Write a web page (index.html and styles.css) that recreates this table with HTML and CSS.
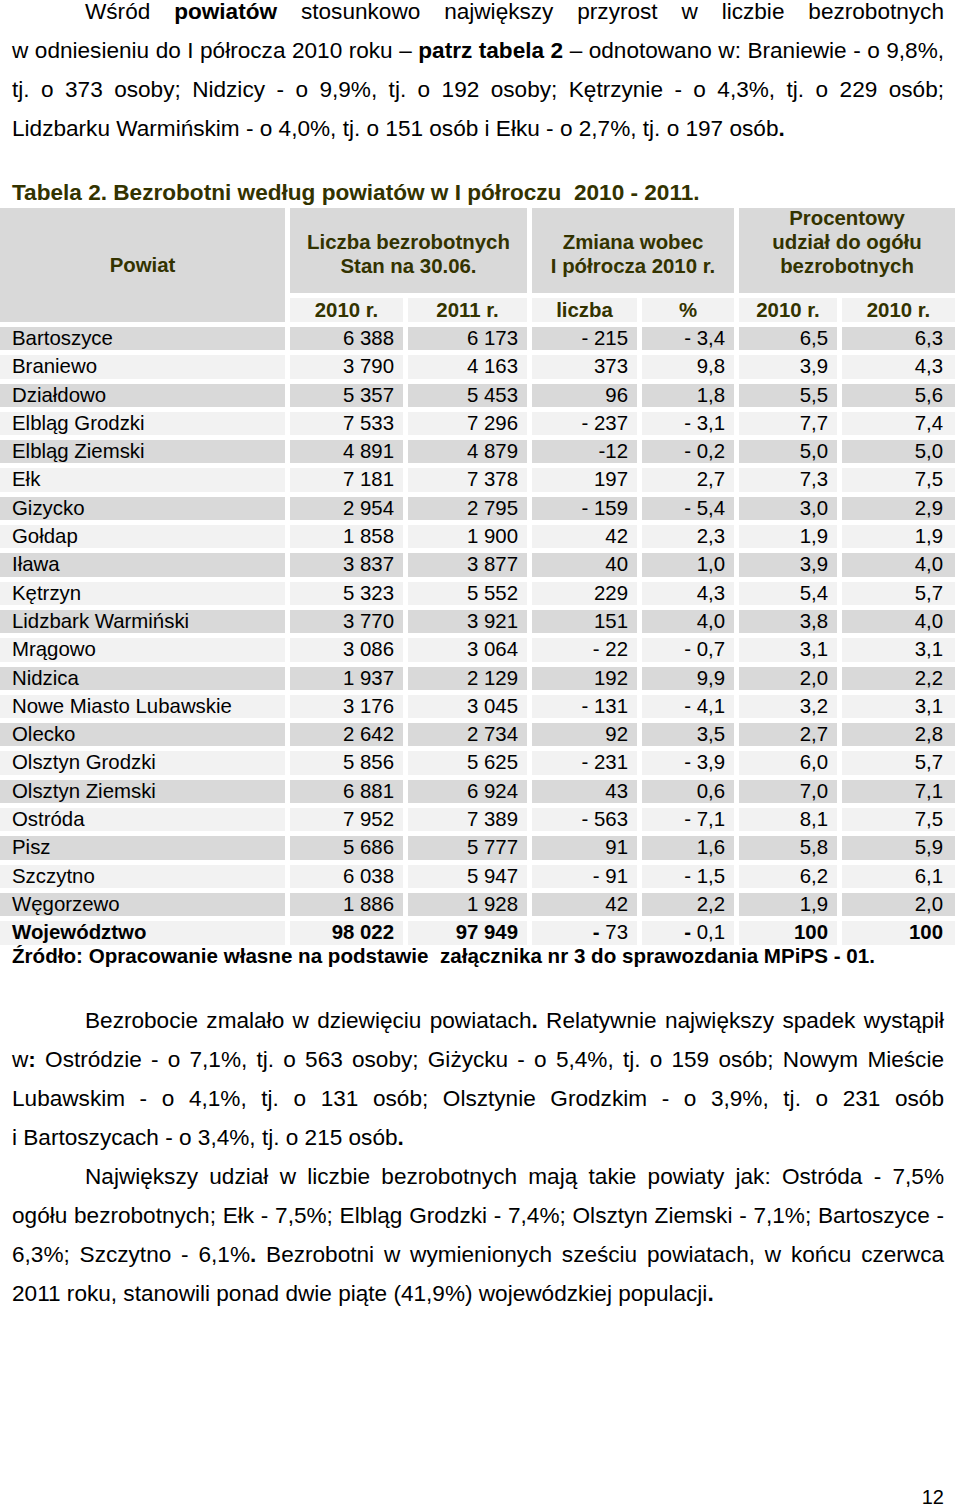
FILE: index.html
```html
<!DOCTYPE html>
<html lang="pl">
<head>
<meta charset="utf-8">
<title>Tabela 2</title>
<link rel="stylesheet" href="styles.css">
</head>
<body>
<div class="page">
  <p class="para first">Wśród <b>powiatów</b> stosunkowo największy przyrost w&nbsp;liczbie bezrobotnych w&nbsp;odniesieniu do I&nbsp;półrocza 2010 roku – <b>patrz tabela 2</b> – odnotowano w: Braniewie - o&nbsp;9,8%, tj. o&nbsp;373 osoby; Nidzicy - o&nbsp;9,9%, tj. o&nbsp;192 osoby; Kętrzynie - o&nbsp;4,3%, tj. o&nbsp;229 osób; Lidzbarku Warmińskim - o&nbsp;4,0%, tj. o&nbsp;151 osób i&nbsp;Ełku - o&nbsp;2,7%, tj. o&nbsp;197 osób<b>.</b></p>

  <h2 class="caption">Tabela 2. Bezrobotni według powiatów w I półroczu &nbsp;2010 - 2011.</h2>

  <div class="grid">
    <div class="h h-powiat">Powiat</div>
    <div class="h h-group span2">Liczba bezrobotnych<br>Stan na 30.06.</div>
    <div class="h h-group span2">Zmiana wobec<br>I półrocza 2010 r.</div>
    <div class="h h-group span2">Procentowy<br>udział do ogółu<br>bezrobotnych</div>
    <div class="h sub">2010 r.</div>
    <div class="h sub">2011 r.</div>
    <div class="h sub">liczba</div>
    <div class="h sub">%</div>
    <div class="h sub">2010 r.</div>
    <div class="h sub">2010 r.</div>

    <div class="c name g">Bartoszyce</div><div class="c g">6 388</div><div class="c g">6 173</div><div class="c g">- 215</div><div class="c g">- 3,4</div><div class="c g">6,5</div><div class="c g last">6,3</div>
    <div class="c name">Braniewo</div><div class="c">3 790</div><div class="c">4 163</div><div class="c">373</div><div class="c">9,8</div><div class="c">3,9</div><div class="c last">4,3</div>
    <div class="c name g">Działdowo</div><div class="c g">5 357</div><div class="c g">5 453</div><div class="c g">96</div><div class="c g">1,8</div><div class="c g">5,5</div><div class="c g last">5,6</div>
    <div class="c name">Elbląg Grodzki</div><div class="c">7 533</div><div class="c">7 296</div><div class="c">- 237</div><div class="c">- 3,1</div><div class="c">7,7</div><div class="c last">7,4</div>
    <div class="c name g">Elbląg Ziemski</div><div class="c g">4 891</div><div class="c g">4 879</div><div class="c g">-12</div><div class="c g">- 0,2</div><div class="c g">5,0</div><div class="c g last">5,0</div>
    <div class="c name">Ełk</div><div class="c">7 181</div><div class="c">7 378</div><div class="c">197</div><div class="c">2,7</div><div class="c">7,3</div><div class="c last">7,5</div>
    <div class="c name g">Gizycko</div><div class="c g">2 954</div><div class="c g">2 795</div><div class="c g">- 159</div><div class="c g">- 5,4</div><div class="c g">3,0</div><div class="c g last">2,9</div>
    <div class="c name">Gołdap</div><div class="c">1 858</div><div class="c">1 900</div><div class="c">42</div><div class="c">2,3</div><div class="c">1,9</div><div class="c last">1,9</div>
    <div class="c name g">Iława</div><div class="c g">3 837</div><div class="c g">3 877</div><div class="c g">40</div><div class="c g">1,0</div><div class="c g">3,9</div><div class="c g last">4,0</div>
    <div class="c name">Kętrzyn</div><div class="c">5 323</div><div class="c">5 552</div><div class="c">229</div><div class="c">4,3</div><div class="c">5,4</div><div class="c last">5,7</div>
    <div class="c name g">Lidzbark Warmiński</div><div class="c g">3 770</div><div class="c g">3 921</div><div class="c g">151</div><div class="c g">4,0</div><div class="c g">3,8</div><div class="c g last">4,0</div>
    <div class="c name">Mrągowo</div><div class="c">3 086</div><div class="c">3 064</div><div class="c">- 22</div><div class="c">- 0,7</div><div class="c">3,1</div><div class="c last">3,1</div>
    <div class="c name g">Nidzica</div><div class="c g">1 937</div><div class="c g">2 129</div><div class="c g">192</div><div class="c g">9,9</div><div class="c g">2,0</div><div class="c g last">2,2</div>
    <div class="c name">Nowe Miasto Lubawskie</div><div class="c">3 176</div><div class="c">3 045</div><div class="c">- 131</div><div class="c">- 4,1</div><div class="c">3,2</div><div class="c last">3,1</div>
    <div class="c name g">Olecko</div><div class="c g">2 642</div><div class="c g">2 734</div><div class="c g">92</div><div class="c g">3,5</div><div class="c g">2,7</div><div class="c g last">2,8</div>
    <div class="c name">Olsztyn Grodzki</div><div class="c">5 856</div><div class="c">5 625</div><div class="c">- 231</div><div class="c">- 3,9</div><div class="c">6,0</div><div class="c last">5,7</div>
    <div class="c name g">Olsztyn Ziemski</div><div class="c g">6 881</div><div class="c g">6 924</div><div class="c g">43</div><div class="c g">0,6</div><div class="c g">7,0</div><div class="c g last">7,1</div>
    <div class="c name">Ostróda</div><div class="c">7 952</div><div class="c">7 389</div><div class="c">- 563</div><div class="c">- 7,1</div><div class="c">8,1</div><div class="c last">7,5</div>
    <div class="c name g">Pisz</div><div class="c g">5 686</div><div class="c g">5 777</div><div class="c g">91</div><div class="c g">1,6</div><div class="c g">5,8</div><div class="c g last">5,9</div>
    <div class="c name">Szczytno</div><div class="c">6 038</div><div class="c">5 947</div><div class="c">- 91</div><div class="c">- 1,5</div><div class="c">6,2</div><div class="c last">6,1</div>
    <div class="c name g">Węgorzewo</div><div class="c g">1 886</div><div class="c g">1 928</div><div class="c g">42</div><div class="c g">2,2</div><div class="c g">1,9</div><div class="c g last">2,0</div>
    <div class="c name total">Województwo</div><div class="c total">98 022</div><div class="c total">97 949</div><div class="c"><b>-</b> 73</div><div class="c"><b>-</b> 0,1</div><div class="c total">100</div><div class="c total last">100</div>
  </div>
  <p class="source">Źródło: Opracowanie własne na podstawie &nbsp;załącznika nr 3 do sprawozdania MPiPS - 01.</p>

  <p class="para second">Bezrobocie zmalało w&nbsp;dziewięciu powiatach<b>.</b> Relatywnie największy spadek wystąpił w<b>:</b> Ostródzie - o&nbsp;7,1%, tj. o&nbsp;563 osoby; Giżycku - o&nbsp;5,4%, tj. o&nbsp;159 osób; Nowym Mieście Lubawskim - o&nbsp;4,1%, tj. o&nbsp;131 osób; Olsztynie Grodzkim - o&nbsp;3,9%, tj. o&nbsp;231 osób i&nbsp;Bartoszycach - o&nbsp;3,4%, tj. o&nbsp;215 osób<b>.</b></p>
  <p class="para">Największy udział w&nbsp;liczbie bezrobotnych mają takie powiaty jak: Ostróda - 7,5% ogółu bezrobotnych; Ełk - 7,5%; Elbląg Grodzki - 7,4%; Olsztyn Ziemski - 7,1%; Bartoszyce - 6,3%; Szczytno - 6,1%<b>.</b> Bezrobotni w&nbsp;wymienionych sześciu powiatach, w&nbsp;końcu czerwca 2011 roku, stanowili ponad dwie piąte (41,9%) wojewódzkiej populacji<b>.</b></p>

  <div class="pagenum">12</div>
</div>
</body>
</html>
```
FILE: styles.css
```css
html, body {
  margin: 0;
  padding: 0;
  background: #ffffff;
}
body {
  font-family: "Liberation Sans", Arial, sans-serif;
  color: #000000;
  width: 960px;
}
.page {
  display: flex;
  flex-direction: column;
}
.para {
  margin: 0;
  padding: 0 16px 0 12px;
  font-size: 22.6px;
  line-height: 39px;
  text-align: justify;
  text-indent: 73px;
}
.para.first {
  margin-top: -8px;
}
.para.second {
  margin-top: 34px;
}
.caption {
  margin: 32px 0 2px 0;
  padding-left: 12px;
  font-size: 22.6px;
  line-height: 26px;
  font-weight: bold;
  color: #333300;
}
.grid {
  display: grid;
  grid-template-columns: 285px 113px 119px 105px 92px 98px 113px;
  grid-template-rows: 85px 24px;
  grid-auto-rows: 23.3px;
  gap: 5px;
  font-size: 20.4px;
}
.h {
  background: #d9d9d9;
  color: #333300;
  font-weight: bold;
  text-align: center;
  line-height: 24px;
  display: flex;
  flex-direction: column;
  justify-content: center;
}
.h-powiat {
  grid-row: span 2;
}
.h-group {
  justify-content: flex-end;
  padding-bottom: 15px;
}
.span2 {
  grid-column: span 2;
}
.sub {
  background: #f2f2f2;
}
.c {
  background: #f2f2f2;
  line-height: 23.3px;
  text-align: right;
  padding-right: 9px;
  white-space: nowrap;
}
.c.g {
  background: #d9d9d9;
}
.c.name {
  text-align: left;
  padding-left: 12px;
  padding-right: 0;
}
.c.last {
  padding-right: 12px;
}
.total {
  font-weight: bold;
}
.source {
  margin: 0;
  padding-left: 12px;
  font-size: 20.6px;
  line-height: 22px;
  font-weight: bold;
}
.pagenum {
  margin-top: 172px;
  text-align: right;
  padding-right: 16px;
  font-size: 20px;
  line-height: 24px;
}
```
